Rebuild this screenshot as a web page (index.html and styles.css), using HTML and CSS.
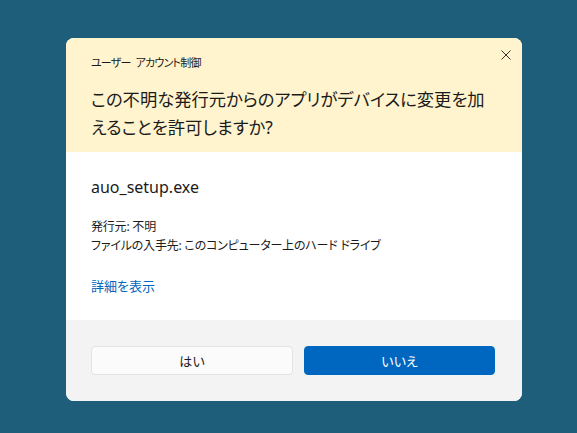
FILE: index.html
```html
<!DOCTYPE html>
<html lang="ja">
<head>
  <meta charset="UTF-8" />
  <meta name="viewport" content="width=device-width, initial-scale=1.0"/>
  <title>ユーザー アカウント制御</title>
  <link rel="stylesheet" href="styles.css">
</head>
<body>
  <div class="dialog">
    <div class="header">
      <div class="caption">ユーザー アカウント制御</div>
      <h1>この不明な発行元からのアプリがデバイスに変更を加<br>えることを許可しますか?</h1>
      <button class="close" aria-label="閉じる">
        <svg width="10" height="10" viewBox="0 0 10 10">
          <path d="M0.5 0.5 L9.5 9.5 M9.5 0.5 L0.5 9.5" stroke="#333" stroke-width="1" fill="none"/>
        </svg>
      </button>
    </div>

    <div class="content">
      <div class="file-name">auo_setup.exe</div>
      <div class="details">
        <div>発行元: 不明</div>
        <div>ファイルの入手先: このコンピューター上のハード ドライブ</div>
      </div>
      <a class="more" href="#">詳細を表示</a>
    </div>

    <div class="footer">
      <button class="btn">はい</button>
      <button class="btn primary">いいえ</button>
    </div>
  </div>
</body>
</html>
```

FILE: styles.css
```css
body {
  margin: 0;
  padding-top: 38px;
  background-color: #1e5e7a;
  font-family: "Noto Sans", "Noto Sans CJK JP", sans-serif;
  font-feature-settings: "palt";
  color: #1b1b1b;
}

.dialog {
  width: 456px;
  margin-left: 66px;
  border-radius: 8px;
  overflow: hidden;
  background-color: #fff;
}

.header {
  position: relative;
  background-color: #fff4ce;
  padding: 17px 25px 10px 25px;
}

.caption {
  font-size: 11px;
  line-height: 16px;
  letter-spacing: -0.8px;
  word-spacing: 3px;
}

h1 {
  margin: 15px 0 0 0;
  font-size: 17.3px;
  font-weight: normal;
  line-height: 28px;
  white-space: nowrap;
}

.close {
  position: absolute;
  top: 6px;
  right: 5px;
  width: 22px;
  height: 22px;
  padding: 0;
  border: none;
  background: none;
  display: flex;
  align-items: center;
  justify-content: center;
}

.content {
  padding: 25px 25px 24px 25px;
}

.file-name {
  font-size: 16px;
  line-height: 20px;
}

.details {
  margin-top: 20px;
  font-size: 12px;
  line-height: 19px;
  letter-spacing: -0.2px;
}

.more {
  display: inline-block;
  margin-top: 22px;
  font-size: 13px;
  line-height: 19px;
  color: #0067c0;
  text-decoration: none;
}

.footer {
  display: grid;
  grid-template-columns: 202px 191px;
  gap: 11px;
  padding: 26px 27px 26px 25px;
  background-color: #f3f3f3;
}

.btn {
  height: 29px;
  font-family: inherit;
  font-feature-settings: "palt";
  font-size: 13px;
  color: #1b1b1b;
  background-color: #fbfbfb;
  border: 1px solid #e3e3e3;
  border-radius: 4px;
}

.btn.primary {
  color: #fff;
  background-color: #0067c0;
  border-color: #0067c0;
}
```
